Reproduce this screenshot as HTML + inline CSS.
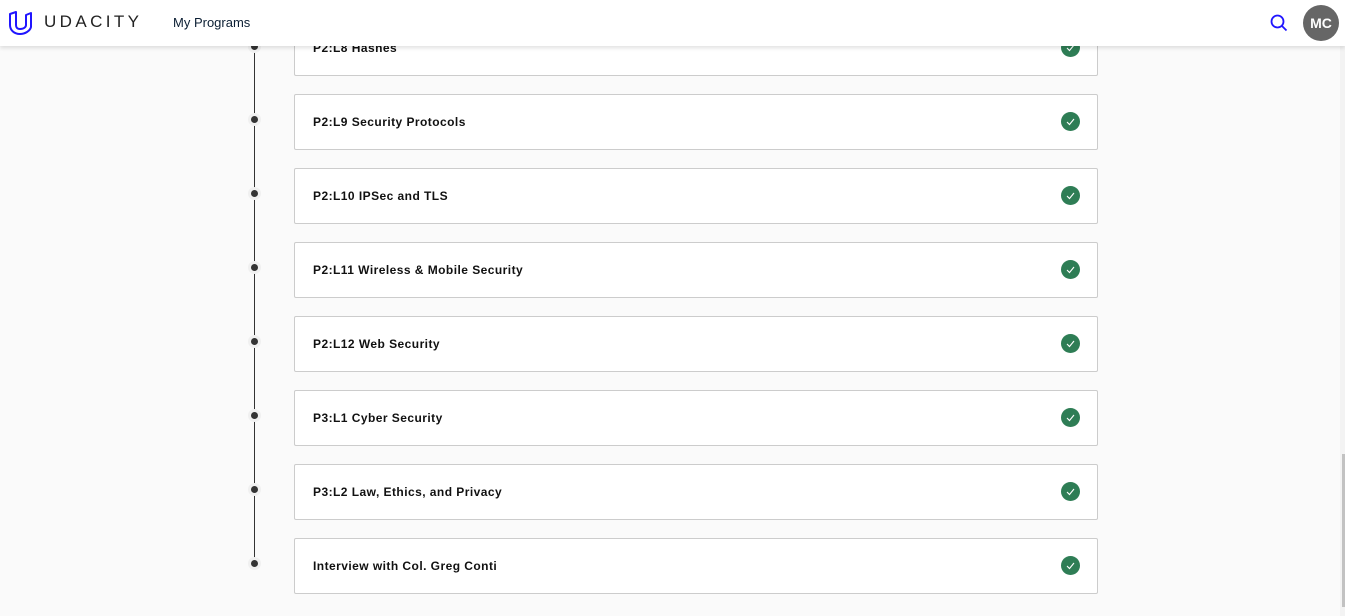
<!DOCTYPE html>
<html><head><style>
*{margin:0;padding:0;box-sizing:border-box}
body{width:1345px;height:616px;overflow:hidden;background:#fafafa;font-family:"Liberation Sans",sans-serif;position:relative}
.hdr{position:absolute;left:0;top:0;width:1345px;height:46px;background:#fff;box-shadow:0 2px 4px rgba(0,0,0,.12);z-index:5}
.logo{position:absolute;left:44px;top:12px;font-size:17px;letter-spacing:3.4px;color:#222}
.mp{position:absolute;left:173px;top:15px;font-size:13px;color:#0b1e33}
.av{position:absolute;left:1303px;top:5px;width:36px;height:36px;border-radius:50%;background:#666;color:#fff;font-weight:bold;font-size:14px;text-align:center;line-height:36px}
.line{position:absolute;left:254px;top:40px;width:1px;height:526px;background:#333}
.dot{position:absolute;left:251px;width:7px;height:7px;border-radius:50%;background:#333;box-shadow:0 0 0 3px #f0f0f0}
.card{position:absolute;left:294px;width:804px;height:56px;background:#fff;border:1px solid #ccc;border-radius:2px}
.card span{position:absolute;left:18px;top:20px;font-size:12px;font-weight:bold;color:#111;letter-spacing:.45px}
.chk{position:absolute;left:766px;top:17px;width:19px;height:19px;border-radius:50%;background:#2e7d55}
.sb{position:absolute;left:1340px;top:46px;width:5px;height:570px;background:#f3f3f3}
.th{position:absolute;left:1342px;top:454px;width:3px;height:153px;background:#c2c2c2}
</style></head><body>
<div class="line"></div>
<div class="dot" style="top:43px"></div>
<div class="dot" style="top:116px"></div>
<div class="dot" style="top:190px"></div>
<div class="dot" style="top:264px"></div>
<div class="dot" style="top:338px"></div>
<div class="dot" style="top:412px"></div>
<div class="dot" style="top:486px"></div>
<div class="dot" style="top:560px"></div>
<div class="card" style="top:20px"><span>P2:L8 Hashes</span><div class="chk"><svg width="19" height="19"><path d="M6 10l2.5 2.5L13 7" stroke="#fff" stroke-width="1.1" fill="none"/></svg></div></div>
<div class="card" style="top:94px"><span>P2:L9 Security Protocols</span><div class="chk"><svg width="19" height="19"><path d="M6 10l2.5 2.5L13 7" stroke="#fff" stroke-width="1.1" fill="none"/></svg></div></div>
<div class="card" style="top:168px"><span>P2:L10 IPSec and TLS</span><div class="chk"><svg width="19" height="19"><path d="M6 10l2.5 2.5L13 7" stroke="#fff" stroke-width="1.1" fill="none"/></svg></div></div>
<div class="card" style="top:242px"><span>P2:L11 Wireless &amp; Mobile Security</span><div class="chk"><svg width="19" height="19"><path d="M6 10l2.5 2.5L13 7" stroke="#fff" stroke-width="1.1" fill="none"/></svg></div></div>
<div class="card" style="top:316px"><span>P2:L12 Web Security</span><div class="chk"><svg width="19" height="19"><path d="M6 10l2.5 2.5L13 7" stroke="#fff" stroke-width="1.1" fill="none"/></svg></div></div>
<div class="card" style="top:390px"><span>P3:L1 Cyber Security</span><div class="chk"><svg width="19" height="19"><path d="M6 10l2.5 2.5L13 7" stroke="#fff" stroke-width="1.1" fill="none"/></svg></div></div>
<div class="card" style="top:464px"><span>P3:L2 Law, Ethics, and Privacy</span><div class="chk"><svg width="19" height="19"><path d="M6 10l2.5 2.5L13 7" stroke="#fff" stroke-width="1.1" fill="none"/></svg></div></div>
<div class="card" style="top:538px"><span>Interview with Col. Greg Conti</span><div class="chk"><svg width="19" height="19"><path d="M6 10l2.5 2.5L13 7" stroke="#fff" stroke-width="1.1" fill="none"/></svg></div></div>
<div class="sb"></div><div class="th"></div>
<div class="hdr">
<svg style="position:absolute;left:8px;top:11px" width="26" height="25" viewBox="0 0 26 25"><path d="M2 3v11c0 5 4 9 10 9c5 0 10-3 11-7V2l-5 2v10c0 2-2 4-6 4c-3 0-4-2-4-4V1z" stroke="#2015ff" stroke-width="2" fill="none" stroke-linejoin="round"/></svg>
<div class="logo">UDACITY</div>
<div class="mp">My Programs</div>
<svg style="position:absolute;left:1270px;top:14px" width="18" height="18" viewBox="0 0 18 18"><circle cx="7.5" cy="7.5" r="6" stroke="#2015ff" stroke-width="1.8" fill="none"/><path d="M12 12l4.5 4.5" stroke="#2015ff" stroke-width="1.8"/></svg>
<div class="av">MC</div>
</div>
</body></html>
